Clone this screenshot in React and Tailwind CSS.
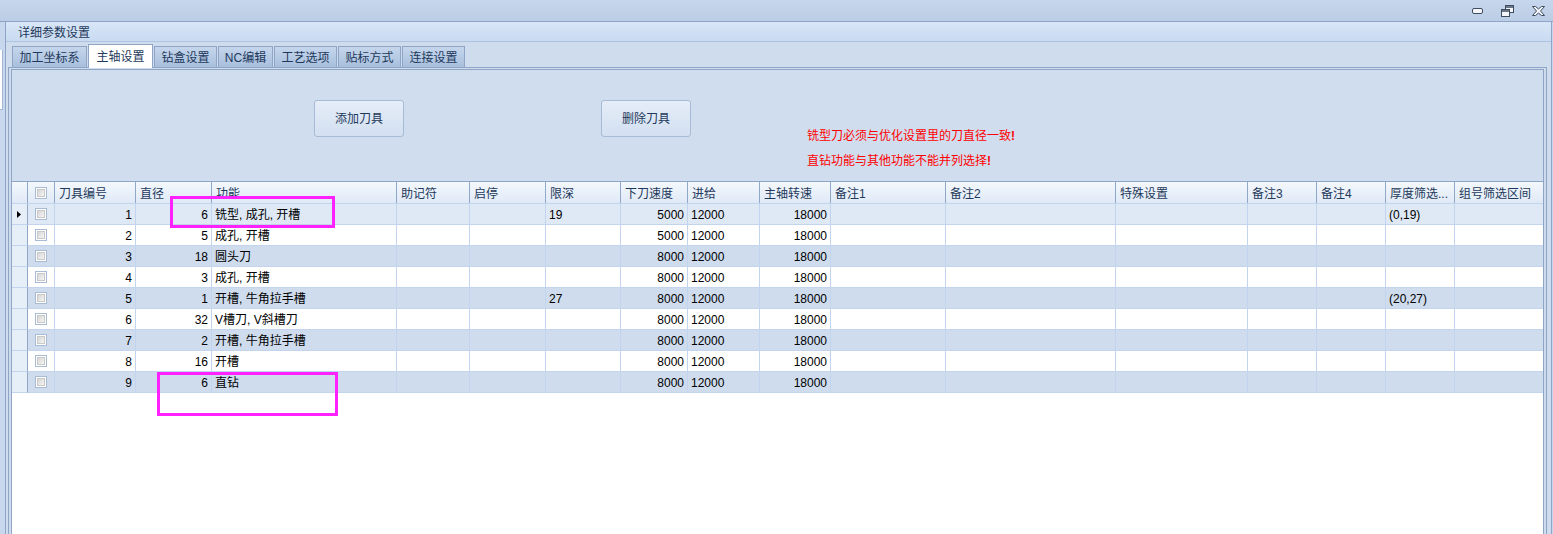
import React from 'react';

const cols = [
  { w: 'w-[81px]', h: '刀具编号', k: 'id', r: true },
  { w: 'w-[76px]', h: '直径', k: 'd', r: true },
  { w: 'w-[185px]', h: '功能', k: 'fn' },
  { w: 'w-[73px]', h: '助记符' },
  { w: 'w-[76px]', h: '启停' },
  { w: 'w-[75px]', h: '限深', k: 'depth' },
  { w: 'w-[67px]', h: '下刀速度', k: 'down', r: true },
  { w: 'w-[72px]', h: '进给', k: 'feed' },
  { w: 'w-[71px]', h: '主轴转速', k: 'rpm', r: true },
  { w: 'w-[115px]', h: '备注1' },
  { w: 'w-[170px]', h: '备注2' },
  { w: 'w-[132px]', h: '特殊设置' },
  { w: 'w-[69px]', h: '备注3' },
  { w: 'w-[69px]', h: '备注4' },
  { w: 'w-[69px]', h: '厚度筛选...', k: 'thick' },
  { w: 'w-[88px]', h: '组号筛选区间', last: true },
];

const rows = [
  { id: 1, d: 6, fn: '铣型, 成孔, 开槽', depth: '19', down: 5000, feed: 12000, rpm: 18000, thick: '(0,19)' },
  { id: 2, d: 5, fn: '成孔, 开槽', down: 5000, feed: 12000, rpm: 18000 },
  { id: 3, d: 18, fn: '圆头刀', down: 8000, feed: 12000, rpm: 18000 },
  { id: 4, d: 3, fn: '成孔, 开槽', down: 8000, feed: 12000, rpm: 18000 },
  { id: 5, d: 1, fn: '开槽, 牛角拉手槽', depth: '27', down: 8000, feed: 12000, rpm: 18000, thick: '(20,27)' },
  { id: 6, d: 32, fn: 'V槽刀, V斜槽刀', down: 8000, feed: 12000, rpm: 18000 },
  { id: 7, d: 2, fn: '开槽, 牛角拉手槽', down: 8000, feed: 12000, rpm: 18000 },
  { id: 8, d: 16, fn: '开槽', down: 8000, feed: 12000, rpm: 18000 },
  { id: 9, d: 6, fn: '直钻', down: 8000, feed: 12000, rpm: 18000 },
];

const tabs = [
  { t: '加工坐标系', w: 'w-[75px]' },
  { t: '主轴设置', w: 'w-[65px]', active: true },
  { t: '钻盒设置', w: 'w-[63px]' },
  { t: 'NC编辑', w: 'w-[55px]' },
  { t: '工艺选项', w: 'w-[63px]' },
  { t: '贴标方式', w: 'w-[63px]' },
  { t: '连接设置', w: 'w-[63px]' },
];

function CheckBox() {
  return (
    <div className="w-[12px] h-[12px] border border-[#a9bbd2] bg-white p-[1px]">
      <div className="w-full h-full border border-[#c9c9c9] bg-gradient-to-br from-[#d6d6d6] to-[#f5f5f5]" />
    </div>
  );
}

function Controls() {
  return (
    <div className="flex items-center h-full pr-[8px]">
      <svg width="11" height="6" viewBox="0 0 11 6" className="block">
        <rect x="0.5" y="0.5" width="10" height="5" rx="1.5" fill="#f4f6fa" stroke="#3e4c60" />
      </svg>
      <svg width="13" height="12" viewBox="0 0 13 12" className="block ml-[18px]">
        <rect x="4.5" y="0.5" width="8" height="7" fill="#f4f6fa" stroke="#3e4c60" />
        <line x1="5" y1="2" x2="12" y2="2" stroke="#3e4c60" strokeWidth="1.5" />
        <rect x="0.5" y="4.5" width="8" height="7" fill="#f4f6fa" stroke="#3e4c60" />
        <line x1="1" y1="6" x2="8" y2="6" stroke="#3e4c60" strokeWidth="1.5" />
      </svg>
      <svg width="13" height="10" viewBox="0 0 13 10" className="block ml-[18px]">
        <path d="M0.5 0.5 H3.5 L6.5 3 L9.5 0.5 H12.5 L8.5 5 L12.5 9.5 H9.5 L6.5 7 L3.5 9.5 H0.5 L4.5 5 Z" fill="#f4f6fa" stroke="#3e4c60" strokeLinejoin="round" />
      </svg>
    </div>
  );
}

export default function App() {
  return (
    <div className="relative w-[1553px] h-[534px] overflow-hidden flex flex-col bg-[#cfdcee] font-[family-name:'Liberation_Sans','Noto_Sans_CJK_SC',sans-serif] text-[12px]">
      {/* window title bar */}
      <div className="h-[22px] shrink-0 border-b border-[#8ea5c5] bg-gradient-to-b from-[#c7d7ec] to-[#bbcde6] flex justify-end">
        <Controls />
      </div>

      <div className="flex flex-1 min-h-0">
        {/* left strip */}
        <div className="w-[5px] shrink-0 bg-[#c6d7ee] flex flex-col">
          <div className="mt-[28px] h-[60px] w-[3px] bg-white border-r border-b border-[#a4b8d4]" />
        </div>

        {/* main panel */}
        <div className="w-[1547px] shrink-0 flex flex-col border-l border-r border-[#8ea5c5]">
          <div className="h-[20px] shrink-0 border-b border-[#aec3df] bg-gradient-to-b from-[#d8e6f7] to-[#c9dbf1] pl-[12px] pt-[3px] flex items-center text-[#1e395b]">
            详细参数设置
          </div>

          {/* tabs */}
          <div className="h-[25px] shrink-0 flex items-end pl-[6px] gap-[1px]">
            {tabs.map((t) =>
              t.active ? (
                <div key={t.t} className={`${t.w} h-[24px] bg-white border border-b-0 border-[#8ea5c5] flex items-center justify-center pt-[1px] text-[#1e395b] -mb-[1px] relative z-10`}>
                  {t.t}
                </div>
              ) : (
                <div key={t.t} className={`${t.w} h-[21px] border border-b-0 border-[#8ea5c5] bg-gradient-to-b from-[#c5d6ec] to-[#a8bfdd] flex items-center justify-center pt-[2px] text-[#1e395b]`}>
                  {t.t}
                </div>
              )
            )}
          </div>

          {/* tab content */}
          <div className="flex-1 min-h-0 ml-[2px] mr-[4px] border border-b-0 border-[#8ea5c5] pt-[1px] pl-[2px] pr-[2px] flex flex-col">
            <div className="flex-1 min-h-0 border border-b-0 border-[#8ea5c5] bg-white flex flex-col">
              {/* upper area */}
              <div className="h-[111px] shrink-0 bg-[#d0ddee] flex items-start">
                <button className="ml-[302px] mt-[30px] w-[90px] h-[37px] rounded-[3px] border border-[#a7bbd6] bg-gradient-to-b from-[#e5edf8] to-[#d3e0f1] text-[#1e395b] text-[12px]">
                  添加刀具
                </button>
                <button className="ml-[197px] mt-[30px] w-[90px] h-[37px] rounded-[3px] border border-[#a7bbd6] bg-gradient-to-b from-[#e5edf8] to-[#d3e0f1] text-[#1e395b] text-[12px]">
                  删除刀具
                </button>
                <div className="ml-[116px] mt-[54px] leading-[25px] text-[#ff0000]">
                  <div>铣型刀必须与优化设置里的刀直径一致<span className="font-bold">!</span></div>
                  <div>直钻功能与其他功能不能并列选择<span className="font-bold">!</span></div>
                </div>
              </div>

              {/* grid header */}
              <div className="h-[23px] shrink-0 flex border-t border-b border-t-[#8ea5c5] border-b-[#c3d5ee] bg-gradient-to-b from-[#f4f8fd] to-[#dfe9f6] text-[#1e395b]">
                <div className="w-[16px] shrink-0 border-r border-[#8fa8c8]" />
                <div className="w-[27px] shrink-0 border-r border-[#8fa8c8] flex items-center justify-center">
                  <CheckBox />
                </div>
                {cols.map((c) => (
                  <div key={c.h} className={`${c.w} shrink-0 ${c.last ? '' : 'border-r border-[#8fa8c8]'} pl-[4px] pt-[2px] flex items-center whitespace-nowrap overflow-hidden`}>
                    {c.h}
                  </div>
                ))}
              </div>

              {/* rows */}
              {rows.map((r, i) => {
                const bg = i === 0 ? 'bg-[#dfe9f5]' : i % 2 === 0 ? 'bg-[#cfdcee]' : 'bg-white';
                return (
                  <div key={r.id} className={`h-[21px] shrink-0 flex ${bg} text-black`}>
                    <div className="w-[16px] shrink-0 border-r border-b border-r-[#8fa8c8] border-b-[#c3d5ee] bg-[#e6eef8] flex items-center pl-[5px]">
                      {i === 0 && (
                        <svg width="4" height="7" viewBox="0 0 4 7" className="block">
                          <path d="M0 0 L4 3.5 L0 7 Z" fill="#000" />
                        </svg>
                      )}
                    </div>
                    <div className="w-[27px] shrink-0 border-r border-b border-[#c3d5ee] flex items-center justify-center">
                      <CheckBox />
                    </div>
                    {cols.map((c) => (
                      <div key={c.h} className={`${c.w} shrink-0 border-b border-[#c3d5ee] ${c.last ? '' : 'border-r'} ${c.r ? 'justify-end pr-[3px]' : 'pl-[3px]'} pt-[1px] flex items-center whitespace-nowrap overflow-hidden`}>
                        {c.k ? r[c.k] : ''}
                      </div>
                    ))}
                  </div>
                );
              })}
            </div>
          </div>
        </div>

        {/* right strip */}
        <div className="w-[1px] shrink-0 bg-[#c6d7ee]" />
      </div>

      {/* magenta annotation boxes */}
      <div className="absolute left-[170px] top-[196px] w-[165px] h-[32px] border-[3px] border-[#ff22ff]" />
      <div className="absolute left-[157px] top-[372px] w-[181px] h-[44px] border-[3px] border-[#ff22ff]" />
    </div>
  );
}
